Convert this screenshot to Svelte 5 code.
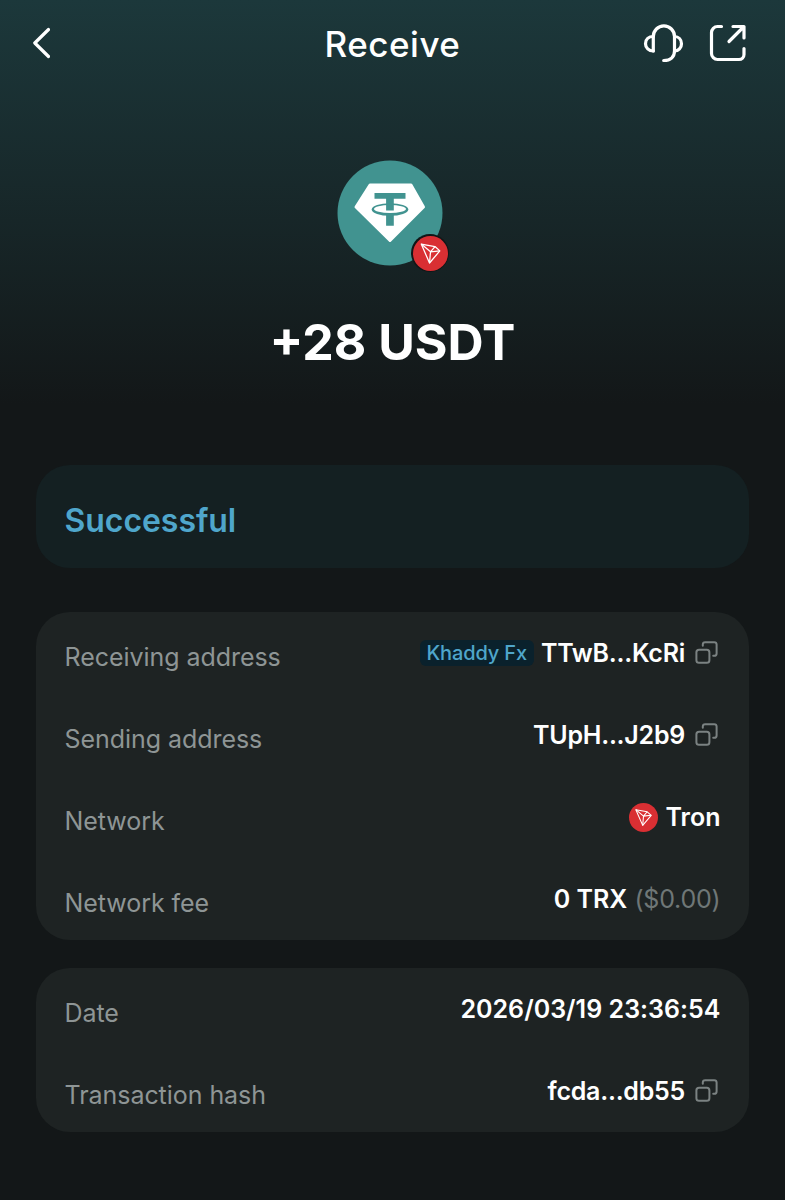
<script>
  const details = [
    { label: 'Receiving address', value: 'TTwB...KcRi', tag: 'Khaddy Fx', copy: true },
    { label: 'Sending address', value: 'TUpH...J2b9', copy: true },
    { label: 'Network', value: 'Tron', tron: true },
    { label: 'Network fee', value: '0 TRX', fiat: '($0.00)' },
  ]

  const meta = [
    { label: 'Date', value: '2026/03/19 23:36:54' },
    { label: 'Transaction hash', value: 'fcda...db55', copy: true },
  ]
</script>

{#snippet tronIcon(size)}
  <svg class="tron" width={size} height={size} viewBox="0 0 36 36">
    <circle cx="18" cy="18" r="18" fill="#d92f33" />
    <g fill="none" stroke="#fff" stroke-width="1.3" stroke-linejoin="round">
      <path d="M8.5 8.3 22.6 10.9 27.6 15.3 17 27.8Z" />
      <path d="M8.5 8.3 18 16.3 27.6 15.3M18 16.3 22.6 10.9M18 16.3 17 27.8" />
    </g>
  </svg>
{/snippet}

{#snippet rows(items)}
  <section class="card">
    {#each items as item}
      <div class="row">
        <span class="label">{item.label}</span>
        <div class="value">
          {#if item.tag}<span class="tag">{item.tag}</span>{/if}
          {#if item.tron}{@render tronIcon(29)}{/if}
          <span class:hash={item.copy}>{item.value}</span>
          {#if item.fiat}<span class="fiat">{item.fiat}</span>{/if}
          {#if item.copy}
            <svg class="copy" width="25" height="24" viewBox="0 0 25 24">
              <rect x="1.4" y="8.8" width="13" height="13" rx="2.6" />
              <path d="M7.8 4.8V3.600a2.4 2.4 0 0 1 2.4-2.400h9a2.4 2.4 0 0 1 2.4 2.400v8.800a2.4 2.4 0 0 1-2.4 2.400h-1" />
            </svg>
          {/if}
        </div>
      </div>
    {/each}
  </section>
{/snippet}

<main class="screen">
  <header>
    <svg width="20" height="34" viewBox="0 0 20 34" class="icon">
      <path d="M18.5 3.5 4.8 17 18.5 30.5" />
    </svg>
    <h1>Receive</h1>
    <div class="actions">
      <svg width="42" height="42" viewBox="0 0 42 42" class="icon">
        <path d="M11.300 29V14.500a10.600 10.600 0 0 1 21.200 0v14.500c0 6-4 9.500-10.800 9.500" />
        <path d="M11.300 14.500c-4.500 0-7.800 3-7.800 7.200s3.300 7.300 7.800 7.300M32.500 14.500c4 0 7 3 7 7.200s-3 7.300-7 7.300" />
      </svg>
      <svg width="42" height="42" viewBox="0 0 42 42" class="icon">
        <path d="M14.500 4.500H10.500a6 6 0 0 0-6 6v21a6 6 0 0 0 6 6h21.500a5 5 0 0 0 5-5v-6" />
        <path d="M26 4.500h11v11.500M36.500 5 22 19.500" />
      </svg>
    </div>
  </header>

  <div class="hero">
    <div class="coin">
      <svg width="106" height="106" viewBox="0 0 106 106">
        <circle cx="53" cy="53" r="52.5" fill="#419390" />
        <path d="M33 25h41l12.500 22L53 80.500 19 47Z" fill="#fff" stroke="#fff" stroke-width="3" stroke-linejoin="round" />
        <g fill="#419390">
          <ellipse cx="53" cy="49.5" rx="18.3" ry="6.3" />
          <ellipse cx="53" cy="49" rx="16" ry="4" fill="#fff" />
          <path d="M37.500 33h31v5.700H56.800v11.700h-7.700V38.700H37.500ZM49.100 54.500h7.700v11.200h-7.700Z" />
        </g>
      </svg>
      <div class="chain">{@render tronIcon(35)}</div>
    </div>
    <p class="amount">+28 USDT</p>
  </div>

  <section class="status">Successful</section>
  {@render rows(details)}
  {@render rows(meta)}
</main>

<style>
  :global(body) { margin: 0; background: #131718; }
  .screen {
    box-sizing: border-box;
    width: 785px;
    height: 1200px;
    padding: 0 36px;
    overflow: hidden;
    background: linear-gradient(#1c383b 0, #131718 405px);
    color: #fff;
    font-family: Inter, "Liberation Sans", sans-serif;
  }
  header {
    display: grid;
    grid-template-columns: 1fr auto 1fr;
    align-items: center;
    height: 86px;
    margin: 0 0 0 -6px;
  }
  h1 { margin: 2px 0 0 6px; font-size: 35px; line-height: 42px; font-weight: 500; letter-spacing: .5px; }
  .icon { fill: none; stroke: #fff; stroke-width: 3.2; stroke-linecap: round; stroke-linejoin: round; }
  .actions { display: flex; justify-content: flex-end; gap: 23px; }
  .hero { display: flex; flex-direction: column; align-items: center; height: 305px; padding-top: 74px; }
  .coin { position: relative; width: 106px; height: 106px; margin-right: 5px; }
  .coin > svg { display: block; }
  .chain { position: absolute; left: 74px; top: 74px; padding: 1.5px; border-radius: 50%; background: #111617; }
  .tron { display: block; }
  .amount { margin: 46px 0 0; font-size: 50px; line-height: 60px; font-weight: 700; }
  .status {
    display: flex;
    align-items: center;
    box-sizing: border-box;
    height: 103px;
    margin-bottom: 44px;
    padding: 7px 28.5px 0;
    border-radius: 34px;
    background: #142022;
    color: #4fa6cb;
    font-size: 32px;
    font-weight: 600;
    letter-spacing: -.05px;
  }
  .card { width: 713px; margin-bottom: 28px; border-radius: 34px; background: #1e2323; }
  .row {
    display: flex;
    align-items: center;
    justify-content: space-between;
    box-sizing: border-box;
    height: 82px;
    padding: 0 28.5px;
    font-size: 25px;
    line-height: 30px;
  }
  .label { margin-top: 7px; color: #8e9595; letter-spacing: -.05px; }
  .value { display: flex; align-items: center; gap: 7px; font-weight: 600; letter-spacing: .03px; }
  .value .hash { letter-spacing: -.25px; }
  .tag { padding: 0 7px; border-radius: 6px; background: #0a212c; color: #4fa6cb; font-size: 20px; line-height: 26px; font-weight: 500; letter-spacing: -.15px; }
  .fiat { color: #6f7777; font-weight: 400; letter-spacing: -.2px; }
  .copy { margin: 0 .5px 0 3px; fill: none; stroke: #7b8282; stroke-width: 2; stroke-linecap: round; }
</style>
